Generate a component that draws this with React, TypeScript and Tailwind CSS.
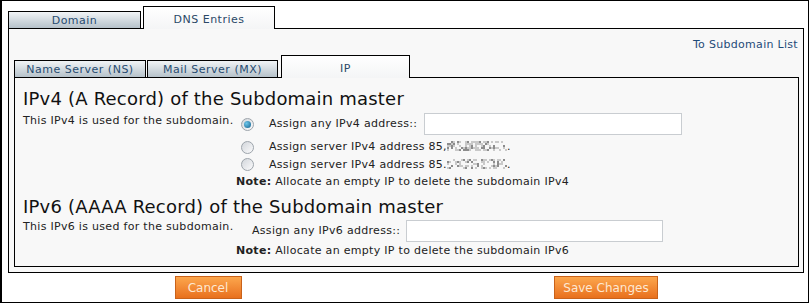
import React from "react";

function Radio({ checked }: { checked?: boolean }) {
  return (
    <span className="inline-flex h-[13px] w-[13px] shrink-0 items-center justify-center rounded-full border border-[#9da4ab] bg-gradient-to-br from-[#d2d6db] to-[#fbfbfc]">
      {checked && (
        <span className="h-[7px] w-[7px] rounded-full bg-[radial-gradient(circle_at_35%_35%,#6cc6ea,#135f8c)]" />
      )}
    </span>
  );
}

function Noise({ seed }: { seed: number }) {
  const cells: React.ReactNode[] = [];
  let s = seed;
  for (let y = 0; y < 10; y += 2) {
    for (let x = 0; x < 60; x += 2) {
      s = (s * 9301 + 49297) % 233280;
      const v = s / 233280;
      if (v < 0.5) {
        cells.push(
          <rect key={`${x}-${y}`} x={x} y={y} width="2" height="2" fill={v < 0.18 ? "#8c8c8c" : "#c9c9c9"} />
        );
      }
    }
  }
  return (
    <svg width="60" height="10" className="inline-block align-[-1px]">
      {cells}
    </svg>
  );
}

function Tab({ label, active, width }: { label: string; active?: boolean; width: string }) {
  if (active) {
    return (
      <div
        className={`${width} flex h-[23px] items-center justify-center border border-b-0 border-black bg-gradient-to-b from-white to-[#f4f5f6] pt-[3px] text-[11px] tracking-[0.5px] text-[#2a4866]`}
      >
        {label}
      </div>
    );
  }
  return (
    <div
      className={`${width} flex h-[18px] items-center justify-center border border-black bg-gradient-to-b from-[#f1f4f6] to-[#b6c2ca] pt-[2px] text-[11px] tracking-[0.5px] text-[#264b70]`}
    >
      {label}
    </div>
  );
}

export default function App() {
  return (
    <div className="box-border h-[303px] w-[809px] border border-l-2 border-black bg-white pl-[6px] pt-[5px] font-['DejaVu_Sans',sans-serif] text-[11px] leading-[14px] tracking-[0.3px] text-[#222]">
      {/* top tabs */}
      <div className="relative z-10 -mb-px flex items-end">
        <Tab label="Domain" width="w-[133px]" />
        <div className="ml-[2px]">
          <Tab label="DNS Entries" width="w-[132px]" active />
        </div>
      </div>

      <div className="box-border h-[245px] w-[796px] border border-black bg-[#f8f8f8] pb-[5px] pl-[5px] pr-[4px]">
        <div className="h-[26px] pr-[1px] pt-[9px] text-right">
          <a href="#" className="text-[#1f4b78]">To Subdomain List</a>
        </div>

        {/* sub tabs */}
        <div className="relative z-10 -mb-px flex items-end">
          <Tab label="Name Server (NS)" width="w-[132px]" />
          <div className="ml-[1px]">
            <Tab label="Mail Server (MX)" width="w-[131px]" />
          </div>
          <div className="ml-[3px]">
            <Tab label="IP" width="w-[129px]" active />
          </div>
        </div>

        <div className="box-border h-[190px] w-[785px] border border-black bg-[#f8f8f8] pl-[8px] pt-[10px]">
          <h2 className="text-[18px] leading-[22px] tracking-[0.2px] text-[#111]">IPv4 (A Record) of the Subdomain master</h2>
          <div className="flex">
            <div className="w-[213px] shrink-0 pt-[4px]">This IPv4 is used for the subdomain.</div>
            <div className="flex flex-col">
              <div className="flex h-[28px] items-center pl-[5px]">
                <Radio checked />
                <span className="ml-[15px]">Assign any IPv4 address::</span>
                <input className="ml-[7px] box-border h-[22px] w-[258px] border border-[#c9cdd1] bg-white" />
              </div>
              <div className="flex h-[18px] items-center pl-[5px]">
                <Radio />
                <span className="ml-[15px]">
                  Assign server IPv4 address 85,<Noise seed={17} />.
                </span>
              </div>
              <div className="flex h-[17px] items-center pl-[5px]">
                <Radio />
                <span className="ml-[15px]">
                  Assign server IPv4 address 85.<Noise seed={91} />.
                </span>
              </div>
              <div className="flex h-[17px] items-center">
                <span>
                  <b>Note:</b> Allocate an empty IP to delete the subdomain IPv4
                </span>
              </div>
            </div>
          </div>

          <h2 className="mt-[6px] text-[18px] leading-[22px] tracking-[0.2px] text-[#111]">IPv6 (AAAA Record) of the Subdomain master</h2>
          <div className="flex">
            <div className="w-[213px] shrink-0 pt-[2px]">This IPv6 is used for the subdomain.</div>
            <div className="flex flex-col">
              <div className="flex h-[26px] items-center pl-[16px]">
                <span>Assign any IPv6 address::</span>
                <input className="ml-[6px] box-border h-[22px] w-[257px] border border-[#c9cdd1] bg-white" />
              </div>
              <div className="flex h-[14px] items-center">
                <span>
                  <b>Note:</b> Allocate an empty IP to delete the subdomain IPv6
                </span>
              </div>
            </div>
          </div>
        </div>
      </div>

      {/* buttons */}
      <div className="mt-[3px] grid w-[796px] grid-cols-2">
        <div className="flex justify-center pl-[2px]">
          <button className="box-border h-[23px] w-[67px] border border-[#c9621a] bg-gradient-to-b from-[#fca64c] to-[#e8701c] text-[12px] tracking-normal text-[#fde8d2]">
            Cancel
          </button>
        </div>
        <div className="flex justify-center pl-[2px]">
          <button className="box-border h-[23px] w-[104px] border border-[#c9621a] bg-gradient-to-b from-[#fca64c] to-[#e8701c] text-[12px] tracking-normal text-[#fde8d2]">
            Save Changes
          </button>
        </div>
      </div>
    </div>
  );
}
